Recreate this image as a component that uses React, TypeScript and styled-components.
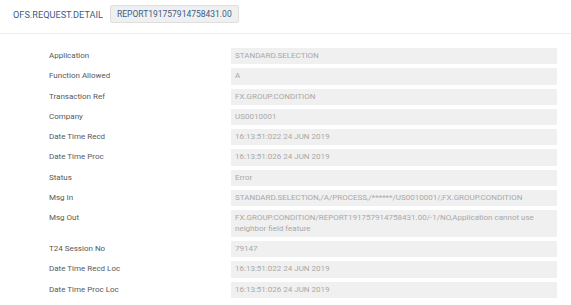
import React from "react";
import styled, { createGlobalStyle } from "styled-components";

const GlobalStyle = createGlobalStyle`
  body {
    margin: 0;
    background: #ffffff;
    font-family: Roboto, "Liberation Sans", Arial, sans-serif;
  }
`;

const Page = styled.div`
  width: 571px;
  min-height: 305px;
  background: #ffffff;
`;

const Header = styled.div`
  display: flex;
  align-items: center;
  gap: 7px;
  padding: 5px 13px 10px;
  border-bottom: 1px solid #ededed;
`;

const Title = styled.span`
  font-size: 9.2px;
  color: #3c5d86;
`;

const Chip = styled.span`
  display: inline-flex;
  align-items: center;
  height: 16px;
  padding: 0 6px;
  font-size: 8.5px;
  color: #3c5d86;
  background: #f0f0f0;
  border: 1px solid #dedede;
  border-radius: 2px;
`;

const Details = styled.div`
  display: grid;
  grid-template-columns: 182px 1fr;
  row-gap: 4px;
  padding: 14px 14px 0 49px;
`;

const Label = styled.div`
  font-size: 8px;
  line-height: 10.3px;
  padding: 3px 0;
  color: #585858;
`;

const Value = styled.div`
  font-size: 8px;
  line-height: 10.3px;
  padding: 3px 4px;
  color: #a9a9a9;
  background: #f0f0f0;
`;

const rows: [string, string][] = [
  ["Application", "STANDARD.SELECTION"],
  ["Function Allowed", "A"],
  ["Transaction Ref", "FX.GROUP.CONDITION"],
  ["Company", "US0010001"],
  ["Date Time Recd", "16:13:51:022 24 JUN 2019"],
  ["Date Time Proc", "16:13:51:026 24 JUN 2019"],
  ["Status", "Error"],
  ["Msg In", "STANDARD.SELECTION,/A/PROCESS,/******/US0010001/,FX.GROUP.CONDITION"],
  [
    "Msg Out",
    "FX.GROUP.CONDITION/REPORT191757914758431.00/-1/NO,Application cannot use neighbor field feature",
  ],
  ["T24 Session No", "79147"],
  ["Date Time Recd Loc", "16:13:51:022 24 JUN 2019"],
  ["Date Time Proc Loc", "16:13:51:026 24 JUN 2019"],
];

const App: React.FC = () => {
  return (
    <Page>
      <GlobalStyle />
      <Header>
        <Title>OFS.REQUEST.DETAIL</Title>
        <Chip>REPORT191757914758431.00</Chip>
      </Header>
      <Details>
        {rows.map(([label, value]) => (
          <React.Fragment key={label}>
            <Label>{label}</Label>
            <Value>{value}</Value>
          </React.Fragment>
        ))}
      </Details>
    </Page>
  );
};

export default App;
